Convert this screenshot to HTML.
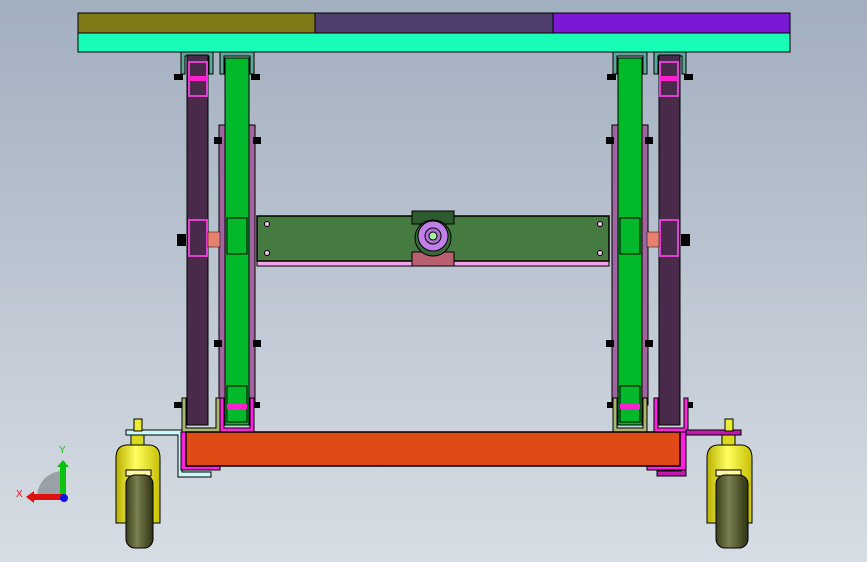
<!DOCTYPE html>
<html><head><style>
html,body{margin:0;padding:0;width:867px;height:562px;overflow:hidden}
body{background:linear-gradient(#a2afbf,#d7dde4)}
</style></head><body>
<svg width="867" height="562" viewBox="0 0 867 562" xmlns="http://www.w3.org/2000/svg" style="position:absolute;left:0;top:0">
<defs>
<linearGradient id="yel" x1="0" x2="1"><stop offset="0" stop-color="#b8b000"/><stop offset=".45" stop-color="#ffff60"/><stop offset="1" stop-color="#c8c000"/></linearGradient>
<linearGradient id="whl" x1="0" x2="1"><stop offset="0" stop-color="#3a3f1a"/><stop offset=".4" stop-color="#7a8050"/><stop offset="1" stop-color="#2e3312"/></linearGradient>
</defs>
<g stroke="#000" stroke-width="1">
<!-- top -->
<rect x="78" y="13" width="237" height="20" fill="#7e7a18"/>
<rect x="315" y="13" width="238" height="20" fill="#4e3d6e"/>
<rect x="553" y="13" width="237" height="20" fill="#7a18d6"/>
<rect x="78" y="33" width="712" height="19" fill="#17fdb8"/>
<!-- top brackets -->
<path d="M181 52v22h4v-18h24v18h4v-22z" fill="#5fa79a"/>
<path d="M220 52v22h4v-18h26v18h4v-22z" fill="#5fa79a"/>
<path d="M613 52v22h4v-18h26v18h4v-22z" fill="#5fa79a"/>
<path d="M654 52v22h4v-18h24v18h4v-22z" fill="#5fa79a"/>
<!-- pink strips -->
<rect x="219" y="125" width="6" height="280" fill="#a065a0"/>
<rect x="249" y="125" width="6" height="280" fill="#a065a0"/>
<rect x="612" y="125" width="6" height="280" fill="#a065a0"/>
<rect x="642" y="125" width="6" height="280" fill="#a065a0"/>
<!-- purple columns -->
<rect x="187" y="55" width="21" height="370" fill="#4a2a4a"/>
<rect x="659" y="55" width="21" height="370" fill="#4a2a4a"/>
<rect x="189" y="62" width="18" height="34" fill="#4a2a4a" stroke="#e040d0" stroke-width="2"/>
<rect x="660" y="62" width="18" height="34" fill="#4a2a4a" stroke="#e040d0" stroke-width="2"/>
<rect x="189" y="220" width="18" height="36" fill="#4a2a4a" stroke="#e040d0" stroke-width="2"/>
<rect x="660" y="220" width="18" height="36" fill="#4a2a4a" stroke="#e040d0" stroke-width="2"/>
<!-- green columns -->
<rect x="225" y="58" width="24" height="367" fill="#02b92c"/>
<rect x="618" y="58" width="24" height="367" fill="#02b92c"/>
<rect x="227" y="218" width="20" height="36" fill="#02b92c"/>
<rect x="620" y="218" width="20" height="36" fill="#02b92c"/>
<rect x="227" y="386" width="20" height="36" fill="#02b92c"/>
<rect x="620" y="386" width="20" height="36" fill="#02b92c"/>
</g>
<g fill="#ff20d0">
<rect x="189" y="76" width="18" height="5"/><rect x="660" y="76" width="18" height="5"/>
<rect x="227" y="404" width="20" height="5"/><rect x="620" y="404" width="20" height="5"/>
</g>
<!-- bolts -->
<g fill="#000">
<rect x="174" y="74" width="9" height="6"/><rect x="251" y="74" width="9" height="6"/>
<rect x="607" y="74" width="9" height="6"/><rect x="684" y="74" width="9" height="6"/>
<rect x="214" y="137" width="8" height="7"/><rect x="253" y="137" width="8" height="7"/>
<rect x="606" y="137" width="8" height="7"/><rect x="645" y="137" width="8" height="7"/>
<rect x="177" y="234" width="9" height="12"/><rect x="681" y="234" width="9" height="12"/>
<rect x="214" y="340" width="8" height="7"/><rect x="253" y="340" width="8" height="7"/>
<rect x="606" y="340" width="8" height="7"/><rect x="645" y="340" width="8" height="7"/>
<rect x="174" y="402" width="9" height="6"/><rect x="251" y="402" width="9" height="6"/>
<rect x="607" y="402" width="9" height="6"/><rect x="684" y="402" width="9" height="6"/>
</g>
<!-- salmon hubs -->
<rect x="208" y="232" width="12" height="15" fill="#e88070" stroke="#000" stroke-width=".5"/>
<rect x="647" y="232" width="12" height="15" fill="#e88070" stroke="#000" stroke-width=".5"/>
<!-- center plate -->
<g stroke="#000">
<rect x="257" y="259" width="352" height="7" fill="#f8a0f0"/>
<rect x="257" y="216" width="352" height="45" fill="#457a40" stroke-width="1.5"/>
<rect x="412" y="211" width="42" height="13" fill="#2e5a30"/>
<rect x="412" y="252" width="42" height="14" fill="#b86070"/>
<circle cx="433" cy="238" r="18" fill="#3a6a3a"/>
<circle cx="433" cy="236" r="15" fill="#c080e8"/>
<circle cx="433" cy="236" r="8" fill="#b070d0"/>
<circle cx="433" cy="236" r="4" fill="#a8f0a0"/>
</g>
<g fill="#f8c0f0" stroke="#000" stroke-width="1">
<circle cx="267" cy="224" r="2.5"/><circle cx="267" cy="253" r="2.5"/>
<circle cx="600" cy="224" r="2.5"/><circle cx="600" cy="253" r="2.5"/>
</g>
<!-- bottom brackets -->
<g stroke="#000" stroke-width="1">
<path d="M182 398v34h38v-34h-4v30h-30v-30z" fill="#a8b870"/>
<path d="M220 398v34h34v-34h-4v30h-26v-30z" fill="#ff20e0"/>
<path d="M613 398v34h34v-34h-4v30h-26v-30z" fill="#a8b870"/>
<path d="M654 398v34h34v-34h-4v30h-26v-30z" fill="#ff20e0"/>
<!-- cyan bracket left -->
<path d="M126 430h56v42h29v5h-33v-42h-52z" fill="#c8f8f8"/>
<path d="M181 432h6v33h33v5h-39z" fill="#ff20e0"/>
<!-- magenta bracket right -->
<path d="M741 430h-55v46h-29v-5h24v-36h60z" fill="#c018b0"/>
<path d="M686 432h-6v33h-33v5h39z" fill="#ff20e0"/>
<!-- orange bar -->
<rect x="186" y="432" width="494" height="34" fill="#e04a14" stroke-width="1.5"/>
<!-- casters -->
<rect x="134" y="419" width="8" height="12" fill="#ecec30"/>
<rect x="131" y="435" width="13" height="10" fill="#dada20"/>
<path d="M116 458q0-12 10-13h24q10 1 10 13v65h-44z" fill="url(#yel)"/>
<rect x="126" y="470" width="25" height="6" fill="#fff8a0"/>
<rect x="126" y="475" width="27" height="73" rx="9" fill="url(#whl)"/>
<rect x="725" y="419" width="8" height="12" fill="#ecec30"/>
<rect x="722" y="435" width="13" height="10" fill="#dada20"/>
<path d="M707 458q0-12 10-13h25q10 1 10 13v65h-45z" fill="url(#yel)"/>
<rect x="716" y="470" width="25" height="6" fill="#fff8a0"/>
<rect x="716" y="475" width="32" height="73" rx="9" fill="url(#whl)"/>
</g>
<!-- triad -->
<path d="M37 497a26 26 0 0 1 26 -26v26z" fill="#9aa0a8"/>
<rect x="60" y="466" width="6" height="31" fill="#10c010"/>
<path d="M57 467l6-7 6 7z" fill="#10c010"/>
<rect x="33" y="494" width="30" height="6" fill="#e01010"/>
<path d="M34 491l-8 6 8 6z" fill="#e01010"/>
<circle cx="64" cy="498" r="4" fill="#1010e0"/>
<text x="59" y="453" font-family="Liberation Sans, sans-serif" font-size="10" fill="#10c010">Y</text>
<text x="16" y="497" font-family="Liberation Sans, sans-serif" font-size="10" fill="#e01010">X</text>
</svg>
</body></html>
